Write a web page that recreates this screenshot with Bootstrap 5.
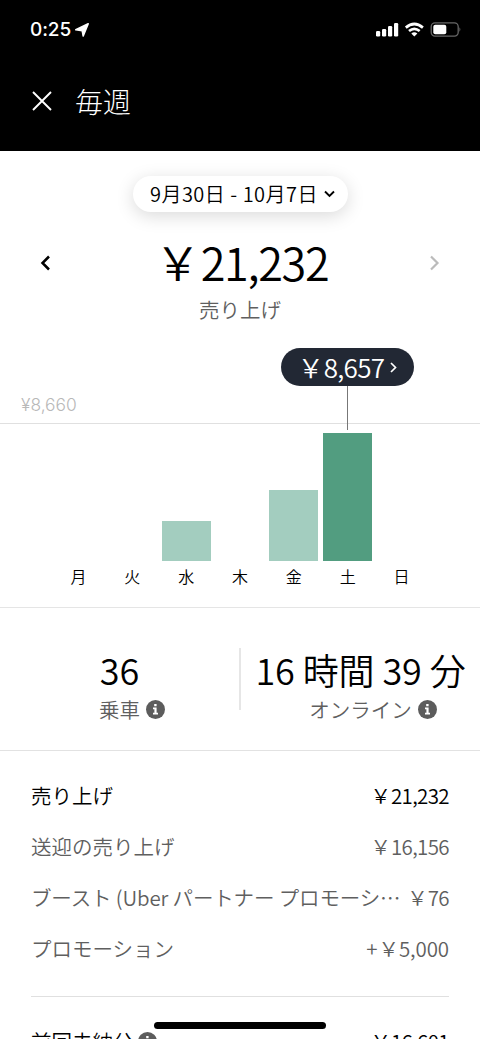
<!DOCTYPE html>
<html lang="ja">
<head>
<meta charset="utf-8">
<meta name="viewport" content="width=device-width, initial-scale=1">
<title>毎週の売り上げ</title>
<link href="https://cdn.jsdelivr.net/npm/bootstrap@5.3.0/dist/css/bootstrap.min.css" rel="stylesheet">
<style>
  html, body { height: 1039px; overflow: hidden; }
  body { font-family: "Noto Sans CJK JP", sans-serif; font-weight: 350; color: #000; background: #fff; line-height: 1; }
  .screen { width: 480px; height: 1039px; }
  svg { display: block; flex: none; }
  .top-bar { height: 151px; }
  .status { height: 59px; padding: 0 19px 0 30px; }
  .clock { font: 500 19px/1 Inter, sans-serif; letter-spacing: -.1px; }
  .title-row { height: 84px; padding-left: 32px; gap: 23px; }
  .title-row h1 { font-size: 28px; font-weight: 300; line-height: 1; }
  .summary { height: 185px; padding-top: 25px; }
  .date-pill { width: 215px; height: 36px; gap: 6px; padding-left: 5px; font-size: 20px; letter-spacing: .5px; box-shadow: 0 4px 18px rgba(0,0,0,.15); }
  .amount-row { height: 54px; margin-top: 24px; padding: 0 39px; }
  .amount { font-size: 45px; margin: -3px 0 0 3px; }
  .amount .yen { font-size: 46px; line-height: 43px; }
  .amount .num { letter-spacing: -1.35px; }
  .num { letter-spacing: -.03em; }
  .yen { letter-spacing: 0; }
  .muted { color: #5f5f5f; }
  .caption { font-size: 20.5px; line-height: 22px; }
  .scale { height: 88px; padding: 0 0 10px 21px; border-bottom: 1px solid #e0e0e0; font: 300 17.4px/1 Inter, sans-serif; color: #b8b8b8; }
  .chart { height: 138px; padding: 0 51.6px 1px; }
  .bar { width: 49px; background: #a3cdbf; }
  .bar.selected { background: #529d80; }
  .callout { left: 281px; top: 12px; width: 133px; height: 38px; background: #222834; font-size: 26px; gap: 6px; }
  .callout .yen { font-size: 26px; line-height: 25px; }
  .callout .num { letter-spacing: -.7px; }
  .stem { left: 347px; top: 50px; width: 1px; height: 44px; background: #777; }
  .days { height: 46px; padding: 6px 51.6px 0; border-bottom: 1px solid #e5e5e5; font-size: 16px; }
  .stats { height: 143px; border-bottom: 1px solid #e2e2e2; }
  .stat { padding-top: 43px; }
  .stat-value { font-size: 36px; line-height: 36px; white-space: pre; letter-spacing: -.1px; }
  .stat .caption { margin-top: 11px; gap: 6px; padding-left: 25px; }
  .rule { width: 2px; height: 62px; margin-top: 40px; background: #e6e6e6; }
  .rows { padding: 19px 31px 0; font-size: 20.5px; }
  .line { height: 51px; }
  .boost { letter-spacing: -.15px; }
  .signed { letter-spacing: -.1px; }
  .signed .yen { margin-left: 1px; }
  .bottom-line { border-top: 1px solid #e0e0e0; margin-top: 22px; height: 89px; }
  .home { left: 154px; top: 1022px; width: 172px; height: 7px; background: #000; }
</style>
</head>
<body>
<main class="screen position-relative overflow-hidden">
  <header class="top-bar bg-black text-white">
    <div class="status d-flex align-items-center justify-content-between">
      <div class="d-flex align-items-center gap-1"><span class="clock">0:25</span>
        <svg width="14" height="14" viewBox="0 0 14 14"><path d="M13.2.8 8.2 13 7.2 7.6.8 6.8Z" fill="#fff" stroke="#fff" stroke-width="1.6" stroke-linejoin="round"/></svg>
      </div>
      <div class="d-flex align-items-center">
        <svg width="85" height="16" viewBox="0 0 85 16">
          <g fill="#fff"><rect x="0" y="9" width="4.2" height="5.5" rx="1.2"/><rect x="6" y="7" width="4.2" height="7.5" rx="1.2"/><rect x="12" y="4" width="4.2" height="10.5" rx="1.2"/><rect x="18" y="1" width="4.2" height="13.5" rx="1.2"/></g>
          <g fill="none" stroke="#fff" stroke-width="2.7"><path d="M29.8 5.6Q38.3-1.6 46.9 5.6M33 9Q38.3 4.6 43.7 9"/></g><path d="M35.3 11.5Q38.3 8.9 41.4 11.5L38.3 14.6Z" fill="#fff"/>
          <rect x="55.2" y=".9" width="27" height="13.2" rx="3.8" fill="none" stroke="#686868" stroke-width="1.3"/><rect x="57.3" y="2.8" width="13" height="9.4" rx="2" fill="#fff"/><path d="M83.5 5.2q1.6 2.2 0 4.6z" fill="#777"/>
        </svg>
      </div>
    </div>
    <div class="title-row d-flex align-items-center">
      <svg width="20" height="20" viewBox="0 0 20 20"><path d="M1 1 19 19M19 1 1 19" stroke="#fff" stroke-width="1.9"/></svg>
      <h1 class="m-0">毎週</h1>
    </div>
  </header>

  <section class="summary">
    <div class="date-pill rounded-pill bg-white d-flex align-items-center justify-content-center mx-auto"><span>9月30日 - 10月7日</span>
      <svg width="11" height="8" viewBox="0 0 11 8"><path d="m1 1.5 4.5 4.5L10 1.5" fill="none" stroke="#000" stroke-width="1.9"/></svg>
    </div>
    <div class="amount-row d-flex align-items-center justify-content-between">
      <svg width="12" height="16" viewBox="0 0 12 16"><path d="m10 1.5-6.5 6.5 6.5 6.5" fill="none" stroke="#000" stroke-width="2.5"/></svg>
      <div class="amount d-flex"><span class="yen">&#xFFE5;</span><span class="num">21,232</span></div>
      <svg width="12" height="16" viewBox="0 0 12 16"><path d="m2 1.5 6.5 6.5L2 14.5" fill="none" stroke="#bbb" stroke-width="2.2"/></svg>
    </div>
    <div class="caption muted text-center mt-2">売り上げ</div>
  </section>

  <section class="position-relative">
    <div class="scale d-flex align-items-end">¥8,660</div>
    <div class="callout position-absolute rounded-pill text-white d-flex align-items-center justify-content-center"><div class="d-flex"><span class="yen">&#xFFE5;</span><span class="num">8,657</span></div>
      <svg width="7" height="11" viewBox="0 0 7 11"><path d="m1 1 4.5 4.5L1 10" fill="none" stroke="#fff" stroke-width="1.7"/></svg>
    </div>
    <div class="stem position-absolute"></div>
    <div class="chart d-flex align-items-end">
      <div class="col"></div><div class="col"></div>
      <div class="col"><div class="bar mx-auto" style="height:40px"></div></div>
      <div class="col"></div>
      <div class="col"><div class="bar mx-auto" style="height:71px"></div></div>
      <div class="col"><div class="bar selected mx-auto" style="height:128px"></div></div>
      <div class="col"></div>
    </div>
    <div class="days d-flex text-center"><div class="col">月</div><div class="col">火</div><div class="col">水</div><div class="col">木</div><div class="col">金</div><div class="col">土</div><div class="col">日</div></div>
  </section>

  <section class="stats d-flex">
    <div class="stat col text-center">
      <div class="stat-value">36</div>
      <div class="caption muted d-flex justify-content-center align-items-center">乗車
        <svg width="19" height="19" viewBox="0 0 19 19"><circle cx="9.5" cy="9.5" r="9.5" fill="#5c5c5c"/><path d="M8.2 4h2.4v2.2H8.2zM7 7.6h3.6v5.2H12v1.6H7v-1.6h1.4V9.2H7z" fill="#fff"/></svg>
      </div>
    </div>
    <div class="rule"></div>
    <div class="stat col text-center">
      <div class="stat-value">16 時間 39 分</div>
      <div class="caption muted d-flex justify-content-center align-items-center">オンライン
        <svg width="19" height="19" viewBox="0 0 19 19"><circle cx="9.5" cy="9.5" r="9.5" fill="#5c5c5c"/><path d="M8.2 4h2.4v2.2H8.2zM7 7.6h3.6v5.2H12v1.6H7v-1.6h1.4V9.2H7z" fill="#fff"/></svg>
      </div>
    </div>
  </section>

  <section class="rows">
    <div class="line d-flex align-items-center justify-content-between"><span>売り上げ</span><span class="num"><span class="yen">&#xFFE5;</span>21,232</span></div>
    <div class="line muted d-flex align-items-center justify-content-between"><span>送迎の売り上げ</span><span class="num"><span class="yen">&#xFFE5;</span>16,156</span></div>
    <div class="line muted d-flex align-items-center justify-content-between text-nowrap"><span class="boost">ブースト (Uber パートナー プロモーシ…</span><span class="num"><span class="yen">&#xFFE5;</span>76</span></div>
    <div class="line muted d-flex align-items-center justify-content-between"><span>プロモーション</span><span class="signed">+<span class="yen">&#xFFE5;</span>5,000</span></div>
    <div class="bottom-line d-flex align-items-center justify-content-between">
      <span class="d-flex align-items-center">前回未納分
        <svg class="ms-1" width="19" height="19" viewBox="0 0 19 19"><circle cx="9.5" cy="9.5" r="9.5" fill="#5c5c5c"/><path d="M8.2 4h2.4v2.2H8.2zM7 7.6h3.6v5.2H12v1.6H7v-1.6h1.4V9.2H7z" fill="#fff"/></svg></span>
      <span class="num"><span class="yen">&#xFFE5;</span>16,601</span>
    </div>
  </section>
  <div class="home position-absolute rounded-pill"></div>
</main>
<script src="https://cdn.jsdelivr.net/npm/bootstrap@5.3.0/dist/js/bootstrap.bundle.min.js"></script>
</body>
</html>
